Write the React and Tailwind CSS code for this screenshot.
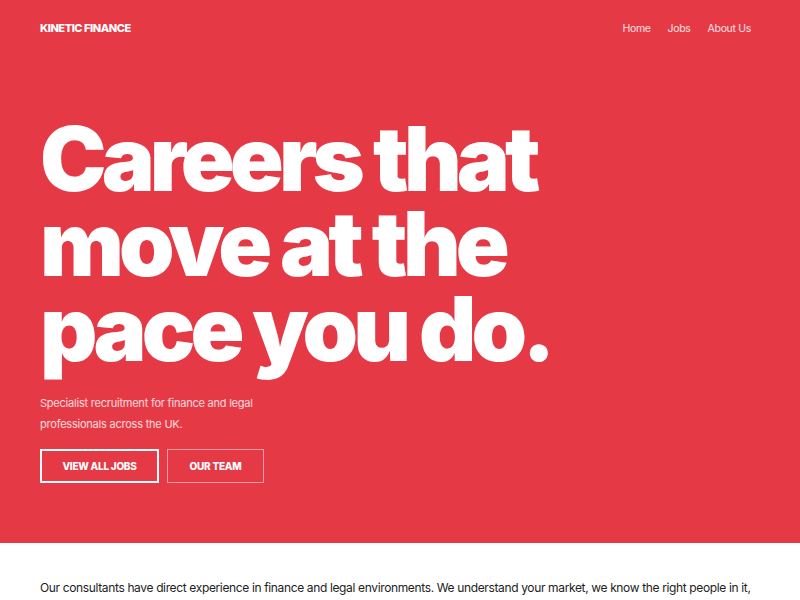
import React from 'react';

const font = { fontFamily: 'Inter, "Noto Sans", sans-serif' };

const NavLink = ({ children }) => (
  <a href="#" className="text-[10.5px] tracking-[-0.03em] text-white/85 hover:text-white">
    {children}
  </a>
);

export default function App() {
  return (
    <div className="min-h-screen bg-white" style={font}>
      {/* Hero */}
      <section className="bg-[#e63946] h-[543px] px-10 flex flex-col">
        <header className="flex items-center justify-between h-[57px] pr-[9px]">
          <span className="text-[11px] font-extrabold tracking-[-0.04em] text-white uppercase">
            Kinetic Finance
          </span>
          <nav className="flex items-center gap-[17px]">
            <NavLink>Home</NavLink>
            <NavLink>Jobs</NavLink>
            <NavLink>About Us</NavLink>
          </nav>
        </header>

        <h1 className="mt-[59px] text-[89px] leading-[85px] font-black tracking-[-0.055em] text-white">
          Careers that
          <br />
          move at the
          <br />
          pace you do.
        </h1>

        <p className="mt-[22px] text-[11px] leading-[21px] tracking-[-0.02em] text-white/80">
          Specialist recruitment for finance and legal
          <br />
          professionals across the UK.
        </p>

        <div className="mt-[14px] flex gap-2">
          <a
            href="#"
            className="w-[119px] h-[34px] flex items-center justify-center border-2 border-white text-[10px] font-extrabold text-white uppercase tracking-tight"
          >
            View all jobs
          </a>
          <a
            href="#"
            className="w-[97px] h-[34px] flex items-center justify-center border border-white/50 text-[10px] font-extrabold text-white uppercase tracking-tight"
          >
            Our team
          </a>
        </div>
      </section>

      {/* Intro */}
      <section className="px-10 pt-[34px]">
        <p className="text-[12px] leading-[22px] text-[#222] tracking-[-0.03em]">
          Our consultants have direct experience in finance and legal environments. We understand your market, we know the right people in it,
        </p>
      </section>
    </div>
  );
}
